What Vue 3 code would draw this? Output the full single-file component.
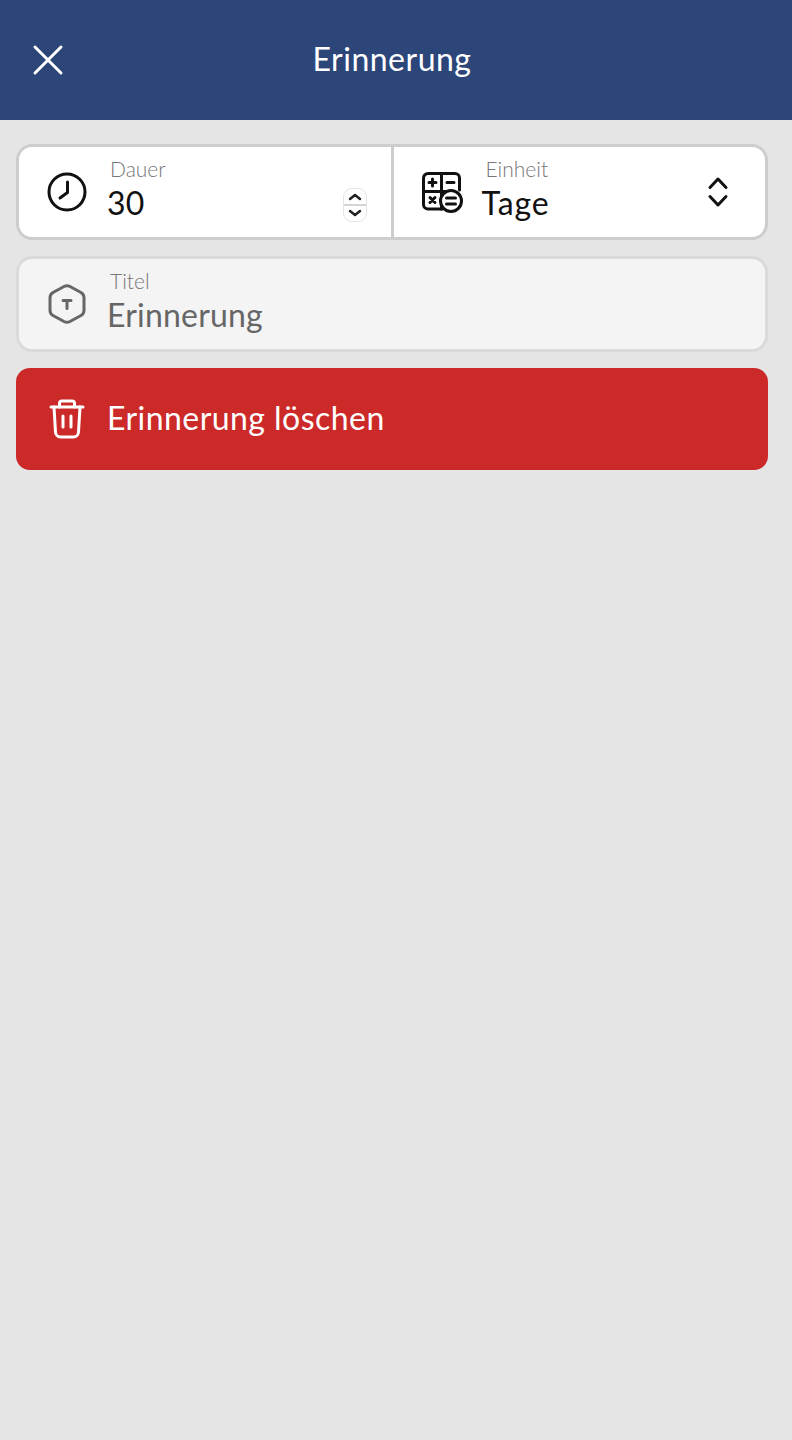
<template>
  <div class="app">
    <header class="topbar">
      <button class="close-btn" aria-label="Schließen">
        <svg width="32" height="32" viewBox="0 0 32 32" fill="none" stroke="#fff" stroke-width="3" stroke-linecap="round">
          <path d="M3 3 L29 29 M29 3 L3 29" />
        </svg>
      </button>
      <h1 class="topbar-title">Erinnerung</h1>
    </header>

    <main class="content">
      <div class="group">
        <div class="field field-half">
          <svg class="field-icon" width="40" height="40" viewBox="0 0 40 40" fill="none" stroke="#111" stroke-width="3" stroke-linecap="round" stroke-linejoin="round">
            <circle cx="20" cy="20" r="18" />
            <path d="M20.500 10 V20.500 L13 26" />
          </svg>
          <div class="field-text">
            <span class="field-label">Dauer</span>
            <span class="field-value">30</span>
          </div>
          <div class="stepper">
            <svg width="24" height="34" viewBox="0 0 24 34" fill="none" stroke="#222" stroke-width="2.500" stroke-linecap="round" stroke-linejoin="round">
              <path d="M7 11 L12 7 L17 11" />
              <path d="M7 23 L12 27 L17 23" />
            </svg>
          </div>
        </div>
        <div class="divider"></div>
        <div class="field field-half field-unit">
          <svg class="field-icon calc-icon" width="42" height="42" viewBox="0 0 42 42" fill="none" stroke="#111" stroke-width="3" stroke-linecap="round" stroke-linejoin="round">
            <path d="M20 37 H6 A4.500 4.500 0 0 1 1.500 32.500 V6 A4.500 4.500 0 0 1 6 1.500 H33 A4.500 4.500 0 0 1 37.500 6 V18" />
            <path d="M19.500 1.500 V37 M1.500 19.500 H24" />
            <path d="M7 10.500 H14 M10.500 7 V14 M25 10.500 H32" />
            <path d="M8 25.500 L13 30.500 M13 25.500 L8 30.500" />
            <circle cx="29" cy="29" r="10.500" fill="#fff" />
            <path d="M24.500 26 H33.500 M24.500 32 H33.500" />
          </svg>
          <div class="field-text">
            <span class="field-label label-unit">Einheit</span>
            <span class="field-value value-unit">Tage</span>
          </div>
          <svg class="select-arrows" width="24" height="32" viewBox="0 0 24 32" fill="none" stroke="#111" stroke-width="3" stroke-linecap="round" stroke-linejoin="round">
            <path d="M4 11.500 L12 3 L20 11.500" />
            <path d="M4 20.500 L12 29 L20 20.500" />
          </svg>
        </div>
      </div>

      <div class="group group-disabled">
        <div class="field">
          <svg class="field-icon" width="40" height="40" viewBox="0 0 40 40" fill="none" stroke="#666" stroke-width="3" stroke-linecap="round" stroke-linejoin="round">
            <path d="M17 2.500 Q20 1 23 2.500 L34 8.500 Q37 10.500 37 13.500 V26.500 Q37 29.500 34 31.500 L23 37.500 Q20 39 17 37.500 L6 31.500 Q3 29.500 3 26.500 V13.500 Q3 10.500 6 8.500 Z" />
            <path d="M16 16.500 H24 M20 16.500 V24.500" />
          </svg>
          <div class="field-text">
            <span class="field-label">Titel</span>
            <span class="field-value value-muted">Erinnerung</span>
          </div>
        </div>
      </div>

      <button class="delete-btn">
        <svg class="field-icon" width="36" height="40" viewBox="0 0 36 40" fill="none" stroke="#fff" stroke-width="3" stroke-linecap="round" stroke-linejoin="round">
          <path d="M2 8 H34" />
          <path d="M10.500 8 V4.500 A2.500 2.500 0 0 1 13 2 H23 A2.500 2.500 0 0 1 25.500 4.500 V8" />
          <path d="M5 8 L6.500 33 A5 5 0 0 0 11.500 38 H24.500 A5 5 0 0 0 29.500 33 L31 8" />
          <path d="M14 17 V28 M22 17 V28" />
        </svg>
        <span class="delete-text">Erinnerung löschen</span>
      </button>
    </main>
  </div>
</template>

<script setup>
</script>

<style>
body { background: #e5e5e5; }
</style>

<style scoped>
* { box-sizing: border-box; margin: 0; padding: 0; }

.app {
  font-family: Lato, 'Open Sans', sans-serif;
  min-height: 1440px;
  background: #e5e5e5;
}

.topbar {
  position: relative;
  height: 120px;
  padding: 0 8px 4px 0;
  background: #2c4679;
  display: flex;
  align-items: center;
  justify-content: center;
}

.topbar-title {
  font-size: 32px;
  font-weight: 400;
  letter-spacing: 0.5px;
  color: #fff;
}

.close-btn {
  position: absolute;
  left: 32px;
  top: 44px;
  width: 32px;
  height: 32px;
  background: none;
  border: none;
  display: flex;
}

.content {
  padding: 24px 24px 24px 16px;
  display: flex;
  flex-direction: column;
  gap: 16px;
}

.group {
  height: 96px;
  display: flex;
  background: #fff;
  border: 3px solid #cdcdcd;
  border-radius: 16px;
  overflow: hidden;
}

.group-disabled {
  background: #f4f4f4;
  border-color: #dadada;
}

.field {
  flex: 1;
  min-width: 0;
  display: flex;
  align-items: center;
  padding: 0 24px 0 28px;
}

.field-half { flex: 0 0 calc((100% - 3px) / 2); }

.field-unit { padding: 0 35px 0 28px; }

.field-icon { flex: none; }

.calc-icon { margin-top: 2px; }

.field-text {
  flex: 1;
  min-width: 0;
  display: flex;
  flex-direction: column;
  margin-left: 20px;
  padding-bottom: 4px;
}

.field-unit .field-text { margin-left: 18px; }

.field-label {
  font-size: 21px;
  font-weight: 300;
  line-height: 24px;
  margin: 0 0 2px 3px;
  color: #777;
}

.label-unit { margin-left: 4px; }

.field-value {
  font-size: 32px;
  line-height: 40px;
  letter-spacing: 0.2px;
  color: #111;
}

.value-unit { letter-spacing: 0.9px; }

.value-muted { color: #666; }

.divider {
  width: 3px;
  background: #cdcdcd;
  flex: none;
}

.stepper {
  flex: none;
  width: 24px;
  height: 34px;
  margin-top: 26px;
  border: 1px solid #e4e4e4;
  border-radius: 9px;
  background: linear-gradient(#fff 0 15px, #d4d4d4 15px 17px, #fff 17px);
  display: flex;
  align-items: center;
  justify-content: center;
}

.stepper svg { flex: none; }

.select-arrows { flex: none; }

.delete-btn {
  height: 102px;
  display: flex;
  align-items: center;
  gap: 22px;
  padding: 0 32px 0 33px;
  background: #cc2929;
  border: none;
  border-radius: 14px;
  color: #fff;
  font-family: inherit;
  font-size: 32px;
  letter-spacing: 0.45px;
  text-align: left;
}

.delete-text { padding-bottom: 4px; }
</style>
